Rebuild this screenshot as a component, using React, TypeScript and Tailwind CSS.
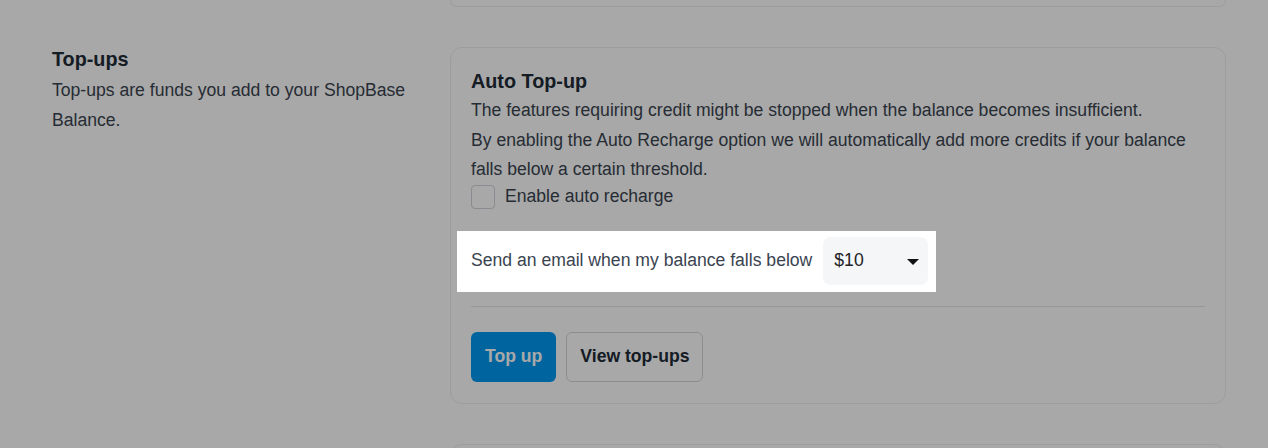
import { useState } from "react";

const thresholds = ["$10", "$20", "$50", "$100"];

export default function App() {
  const [autoRecharge, setAutoRecharge] = useState(false);
  const [threshold, setThreshold] = useState("$10");

  return (
    <div className="h-[448px] overflow-hidden bg-white font-['Liberation_Sans',Arial,sans-serif] text-[#212b36]">
      <div className="pl-[52px] pr-[42px]">
        {/* bottom edge of the card above */}
        <div className="ml-auto h-[7px] w-[776px] rounded-b-xl border border-t-0 border-[#eceef0]" />

        <div className="mt-[40px] flex gap-[28px]">
          {/* left description */}
          <div className="w-[370px]">
            <h2 className="text-[19.8px] font-bold leading-6">Top-ups</h2>
            <p className="mt-[4px] text-[17.6px] leading-[30px] text-[#3a4450]">
              Top-ups are funds you add to your ShopBase Balance.
            </p>
          </div>

          {/* card */}
          <div className="w-[776px] rounded-xl border border-[#eceef0] bg-white px-[20px] pt-[21px] pb-[21px]">
            <h3 className="mb-[3px] text-[19.8px] font-bold leading-6">Auto Top-up</h3>
            <p className="text-[17.6px] leading-[29.5px] text-[#3a4450]">
              The features requiring credit might be stopped when the balance becomes insufficient.
            </p>
            <p className="text-[17.6px] leading-[29.5px] text-[#3a4450]">
              By enabling the Auto Recharge option we will automatically add more credits if your balance falls below a certain threshold.
            </p>

            <label className="flex h-6 cursor-pointer items-center gap-[10px] text-[17.6px] text-[#3a4450]">
              <input
                type="checkbox"
                checked={autoRecharge}
                onChange={(e) => setAutoRecharge(e.target.checked)}
                className="h-6 w-6 appearance-none rounded-[4px] border border-[#cfd4d9] bg-white"
              />
              Enable auto recharge
            </label>

            {/* highlighted row (tour spotlight) */}
            <div className="relative z-10 -ml-[14px] mt-[22px] flex w-fit items-center gap-[11px] bg-white pt-[6px] pb-[7px] pr-[8px] pl-[14px] shadow-[0_0_0_9999px_rgba(0,0,0,0.34)]">
              <span className="text-[17.6px] text-[#3a4450]">Send an email when my balance falls below</span>
              <div className="relative">
                <select
                  value={threshold}
                  onChange={(e) => setThreshold(e.target.value)}
                  className="h-12 w-[105px] appearance-none rounded-lg bg-[#f4f6f8] pl-[11px] text-[17.6px] text-[#222] outline-none"
                >
                  {thresholds.map((t) => (
                    <option key={t}>{t}</option>
                  ))}
                </select>
                <svg
                  className="pointer-events-none absolute top-[22px] right-[9px]"
                  width="12"
                  height="6"
                  viewBox="0 0 12 6"
                >
                  <path d="M0 0h12L6 6z" fill="#111" />
                </svg>
              </div>
            </div>

            <div className="mt-[14px] border-t border-[#e3e5e8]" />

            <div className="mt-[25px] flex gap-[10px]">
              <button className="h-[50px] rounded-md bg-[#0099f2] px-[14px] text-[17.6px] font-bold text-white">
                Top up
              </button>
              <button className="h-[50px] rounded-md border border-[#d4d8dc] bg-white px-[13px] text-[17.6px] font-bold text-[#212b36]">
                View top-ups
              </button>
            </div>
          </div>
        </div>

        {/* top edge of the card below */}
        <div className="mt-[40px] ml-auto h-[20px] w-[776px] rounded-t-xl border border-b-0 border-[#eceef0]" />
      </div>
    </div>
  );
}
